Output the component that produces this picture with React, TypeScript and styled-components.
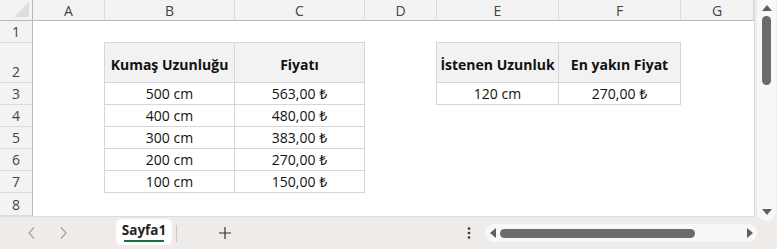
import React from 'react';
import styled, { createGlobalStyle } from 'styled-components';

const GlobalStyle = createGlobalStyle`
    html, body {
        margin:0;
        padding:0;
        background:#eeebe9;
    }
    body {
        font-family:"Open Sans", "Noto Sans", "DejaVu Sans", sans-serif;
    }
`;

const Workbook = styled.div`
    width:777px;
    height:249px;
    display:grid;
    grid-template-rows:217px 32px;
    background:#eeebe9;
    overflow:hidden;
`;

const TopArea = styled.div`
    display:flex;
    min-height:0;
`;

const Sheet = styled.div`
    flex:1;
    display:grid;
    grid-template-columns:33px 72px 130px 130px 72px 122px 122px 1fr;
    grid-template-rows:21px 22px 40px repeat(5, 22px) 1fr;
    background:#fff;
    border-right:1px solid #dcdcdc;
    border-bottom:1px solid #dcdcdc;
`;

const Corner = styled.div`
    grid-column:1;
    grid-row:1;
    background:#f3f3f3;
    border-right:1px solid #b9b9b9;
    border-bottom:1px solid #b9b9b9;
    position:relative;
    &::after{
        content:'';
        position:absolute;
        right:3px;
        bottom:3px;
        border-left:15px solid transparent;
        border-bottom:15px solid #dedede;
    }
`;

const ColHead = styled.div<{ $col: number }>`
    grid-column:${p => p.$col};
    grid-row:1;
    background:#f3f3f3;
    border-right:1px solid #dadada;
    border-bottom:1px solid #b9b9b9;
    display:flex;
    align-items:center;
    justify-content:center;
    font-size:14px;
    color:#444;
`;

const RowHead = styled.div<{ $row: number }>`
    grid-column:1;
    grid-row:${p => p.$row};
    background:#f3f3f3;
    border-right:1px solid #b9b9b9;
    border-bottom:1px solid #dadada;
    display:flex;
    align-items:flex-end;
    justify-content:center;
    padding-bottom:1px;
    font-size:14px;
    color:#444;
    box-sizing:border-box;
`;

const DataTable = styled.div<{ $col: string; $row: string; $rows: number }>`
    grid-column:${p => p.$col};
    grid-row:${p => p.$row};
    align-self:start;
    display:grid;
    grid-template-columns:1fr 1fr;
    grid-template-rows:40px repeat(${p => p.$rows}, 22px);
    margin:-1px 0 0 -1px;
    border-top:1px solid #d6d6d6;
    border-left:1px solid #d6d6d6;
`;

const Cell = styled.div<{ $head?: boolean }>`
    border-right:1px solid #d6d6d6;
    border-bottom:1px solid #d6d6d6;
    background:${p => (p.$head ? '#f2f2f2' : '#fff')};
    display:flex;
    align-items:center;
    justify-content:center;
    padding-top:${p => (p.$head ? '3px' : '0')};
    font-size:14px;
    font-weight:${p => (p.$head ? 700 : 400)};
    color:#111;
    white-space:nowrap;
    box-sizing:border-box;
`;

const VScroll = styled.div`
    width:22px;
    display:flex;
    justify-content:center;
    padding:0 1px 0 2px;
    box-sizing:border-box;
`;

const VTrack = styled.div`
    flex:1;
    margin-bottom:-4px;
    background:#f8f8f8;
    border-radius:0 0 9px 9px;
    display:flex;
    flex-direction:column;
    align-items:center;
    padding:5px 0 6px;
    box-sizing:border-box;
`;

const VThumb = styled.div`
    width:9px;
    height:69px;
    margin-top:5px;
    border-radius:5px;
    background:#6b6b6b;
`;

const Spacer = styled.div`
    flex:1;
`;

const Arrow = styled.div<{ $dir: 'up' | 'down' | 'left' | 'right' }>`
    width:0;
    height:0;
    ${p => p.$dir === 'up' && 'border-left:5px solid transparent;border-right:5px solid transparent;border-bottom:6px solid #5f5f5f;'}
    ${p => p.$dir === 'down' && 'border-left:5px solid transparent;border-right:5px solid transparent;border-top:6px solid #5f5f5f;'}
    ${p => p.$dir === 'left' && 'border-top:5px solid transparent;border-bottom:5px solid transparent;border-right:6px solid #5f5f5f;'}
    ${p => p.$dir === 'right' && 'border-top:5px solid transparent;border-bottom:5px solid transparent;border-left:6px solid #5f5f5f;'}
`;

const TabBar = styled.div`
    display:flex;
    align-items:center;
`;

const SheetNav = styled.div`
    width:116px;
    display:flex;
    align-items:center;
    gap:19px;
    padding-left:26px;
    box-sizing:border-box;
    font-size:17px;
    color:#a0a0a0;
    font-family:"DejaVu Sans", sans-serif;
    font-weight:200;
`;

const NavChevron = styled.svg`
    width:12px;
    height:14px;
`;

const SheetTab = styled.div`
    width:56px;
    height:26px;
    margin-top:2px;
    align-self:flex-start;
    background:#fff;
    border-radius:6px;
    display:flex;
    flex-direction:column;
    align-items:center;
    justify-content:flex-end;
    padding-bottom:3px;
    box-sizing:border-box;
    font-size:13.5px;
    font-weight:700;
    color:#222;
    &::after{
        content:'';
        display:block;
        width:40px;
        height:2px;
        margin-top:1px;
        background:#1d6b3f;
    }
`;

const TabSeparator = styled.div`
    width:1px;
    height:17px;
    margin-left:4px;
    background:#c9c9c9;
`;

const AddSheet = styled.svg`
    width:12px;
    height:12px;
    margin-left:42px;
`;

const Kebab = styled.svg`
    width:4px;
    height:12px;
    margin-right:14px;
`;

const HTrack = styled.div`
    width:272px;
    height:18px;
    margin-right:20px;
    background:#f8f8f8;
    border-radius:9px;
    display:flex;
    align-items:center;
    padding:0 4px 0 5px;
    box-sizing:border-box;
`;

const HThumb = styled.div`
    width:195px;
    height:9px;
    margin-left:4px;
    border-radius:5px;
    background:#6b6b6b;
`;

const columns = ['A', 'B', 'C', 'D', 'E', 'F', 'G'];

const fabric = [
    ['500 cm', '563,00 ₺'],
    ['400 cm', '480,00 ₺'],
    ['300 cm', '383,00 ₺'],
    ['200 cm', '270,00 ₺'],
    ['100 cm', '150,00 ₺'],
];

const App: React.FC = () => {
    return <Workbook>
        <GlobalStyle />
        <TopArea>
            <Sheet>
                <Corner />
                {columns.map((c, i) => <ColHead key={c} $col={i + 2}>{c}</ColHead>)}
                {[1, 2, 3, 4, 5, 6, 7, 8].map(r => <RowHead key={r} $row={r + 1}>{r}</RowHead>)}

                <DataTable $col="3 / 5" $row="3 / 9" $rows={fabric.length}>
                    <Cell $head>Kumaş Uzunluğu</Cell>
                    <Cell $head>Fiyatı</Cell>
                    {fabric.map(([len, price]) => <React.Fragment key={len}>
                        <Cell>{len}</Cell>
                        <Cell>{price}</Cell>
                    </React.Fragment>)}
                </DataTable>

                <DataTable $col="6 / 8" $row="3 / 5" $rows={1}>
                    <Cell $head>İstenen Uzunluk</Cell>
                    <Cell $head>En yakın Fiyat</Cell>
                    <Cell>120 cm</Cell>
                    <Cell>270,00 ₺</Cell>
                </DataTable>
            </Sheet>
            <VScroll>
                <VTrack>
                    <Arrow $dir="up" />
                    <VThumb />
                    <Spacer />
                    <Arrow $dir="down" />
                </VTrack>
            </VScroll>
        </TopArea>
        <TabBar>
            <SheetNav>
                <NavChevron viewBox="0 0 12 14"><path d="M8 1.5 L3 7 L8 12.5" fill="none" stroke="#a3a3a3" strokeWidth="1.2" /></NavChevron>
                <NavChevron viewBox="0 0 12 14"><path d="M4 1.5 L9 7 L4 12.5" fill="none" stroke="#a3a3a3" strokeWidth="1.2" /></NavChevron>
            </SheetNav>
            <SheetTab>Sayfa1</SheetTab>
            <TabSeparator />
            <AddSheet viewBox="0 0 12 12"><path d="M6 0 V12 M0 6 H12" stroke="#333" strokeWidth="1.2" /></AddSheet>
            <Spacer />
            <Kebab viewBox="0 0 4 12">
                <circle cx="2" cy="1.5" r="1.3" fill="#333" />
                <circle cx="2" cy="6" r="1.3" fill="#333" />
                <circle cx="2" cy="10.5" r="1.3" fill="#333" />
            </Kebab>
            <HTrack>
                <Arrow $dir="left" />
                <HThumb />
                <Spacer />
                <Arrow $dir="right" />
            </HTrack>
        </TabBar>
    </Workbook>
}

export default App;
